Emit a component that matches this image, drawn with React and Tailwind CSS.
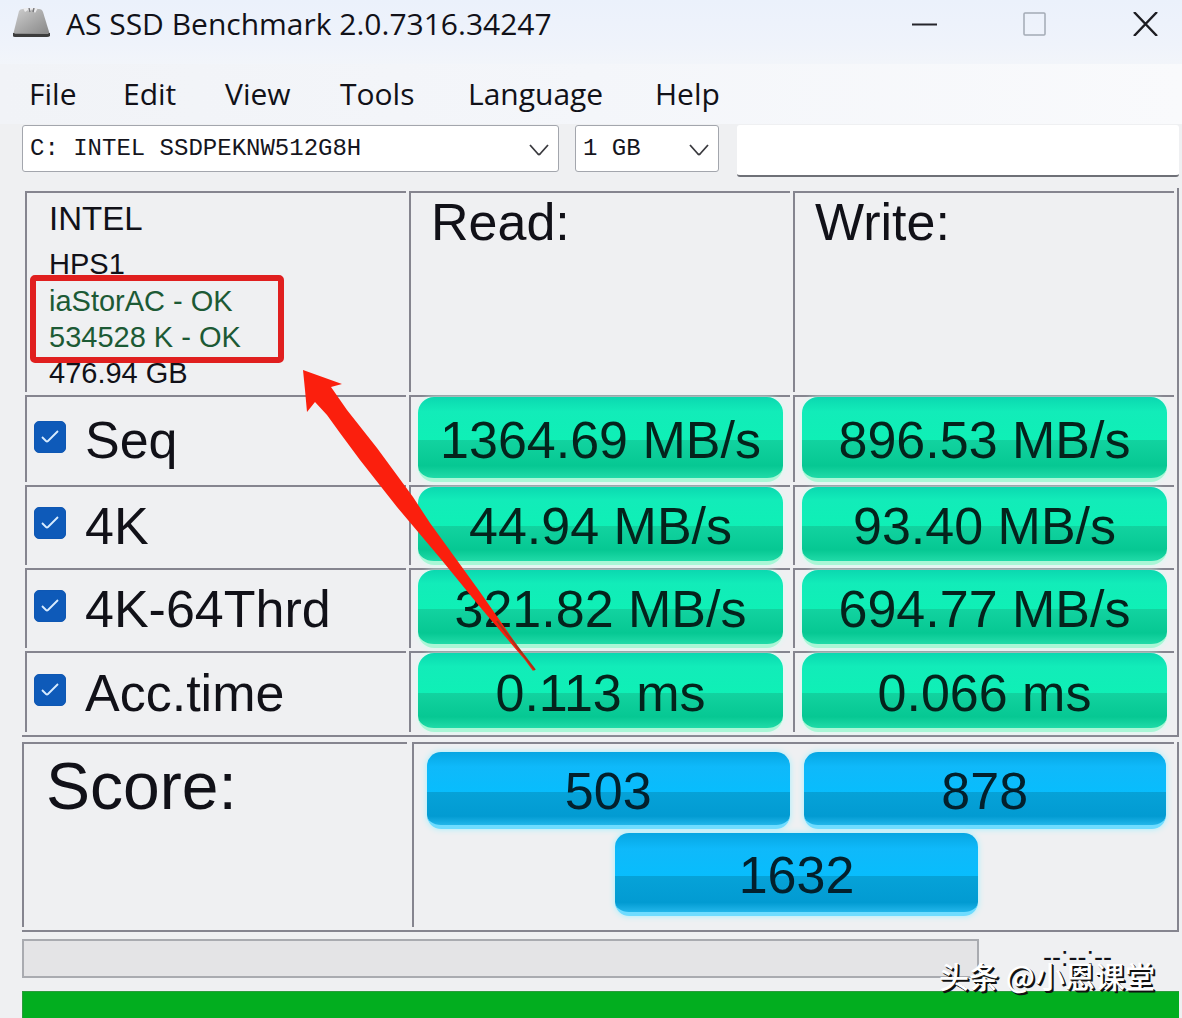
import React, { useState } from "react";

const menuItems = [
  { label: "File", width: "w-[94px]" },
  { label: "Edit", width: "w-[102px]" },
  { label: "View", width: "w-[115px]" },
  { label: "Tools", width: "w-[128px]" },
  { label: "Language", width: "w-[187px]" },
  { label: "Help", width: "w-[94px]" },
];

const tests = [
  { id: "seq", label: "Seq", read: "1364.69 MB/s", write: "896.53 MB/s", height: "h-[87px]" },
  { id: "4k", label: "4K", read: "44.94 MB/s", write: "93.40 MB/s", height: "h-[80px]" },
  { id: "4k64", label: "4K-64Thrd", read: "321.82 MB/s", write: "694.77 MB/s", height: "h-[80px]" },
  { id: "acc", label: "Acc.time", read: "0.113 ms", write: "0.066 ms", height: "h-[81px]" },
];

const cell = "border-l-2 border-t-2 border-[#85858f] p-0 text-left font-normal";

const DriveIcon = () => (
  <svg width="38" height="32" viewBox="0 0 38 32" aria-hidden="true">
    <defs>
      <linearGradient id="drive" x1="0" y1="0" x2="1" y2="1">
        <stop offset="0" stopColor="#cfcfcf" />
        <stop offset="0.5" stopColor="#a9a9a9" />
        <stop offset="1" stopColor="#858585" />
      </linearGradient>
    </defs>
    <path d="M7 3Q8 1 11 1H27Q30 1 31 4L38 27H1Z" fill="url(#drive)" />
    <path d="M1 25H38V28Q37 29 35 29H3Q1 29 1 28Z" fill="#3c3c3c" />
    <path d="M2 25H37L36 26H3Z" fill="#8c8c8c" />
    <path d="M11 0L13 4L16 2L18 4L20 1L23 5L26 0Z" fill="#ececee" />
    <path d="M17 0L18 4M22 0L21 4" stroke="#77777a" strokeWidth="1.4" />
  </svg>
);

const Chevron = () => (
  <svg
    className="pointer-events-none absolute right-[10px] top-[18px]"
    width="20"
    height="14"
    viewBox="0 0 20 14"
    fill="none"
    stroke="#3a3a3f"
    strokeWidth="1.8"
    aria-hidden="true"
  >
    <path d="M1 2L9 11Q10 12 11 11L19 2" />
  </svg>
);

const SelectBox = ({ label, options, className }) => (
  <div className={`relative h-[47px] ${className}`}>
    <select
      aria-label={label}
      className="h-full w-full appearance-none rounded-[3px] border border-[#a3a6ad] bg-white pl-[7px] font-['Liberation_Mono',monospace] text-[24px] text-[#15151d] outline-none"
    >
      {options.map((option) => (
        <option key={option}>{option}</option>
      ))}
    </select>
    <Chevron />
  </div>
);

const GreenBar = ({ children }) => (
  <div className="ml-[7px] mr-[7px] flex h-full items-center justify-center rounded-[16px] border-b-4 border-[#a9f7d6] bg-[linear-gradient(#0bd8b0_0%,#12ecb9_18%,#0ff0b6_53%,#12d3a0_53%,#06c893_85%,#20dba8_100%)] pt-1 text-[52px] leading-none text-[#04231c] shadow-[0_0_5px_#d3fff0]">
    {children}
  </div>
);

const BlueBar = ({ children, className = "" }) => (
  <div
    className={`flex items-center justify-center rounded-[14px] border-b-4 border-[#6fdcff] bg-[linear-gradient(#06a6e2_0%,#0fb9fa_20%,#08bdfd_55%,#06a2d8_55%,#029bd2_88%,#22b6ea_100%)] pt-1 text-[52px] leading-none text-[#03202c] shadow-[0_0_6px_#9ff0ff] ${className}`}
  >
    {children}
  </div>
);

const TestCheckbox = ({ id, checked, onChange }) => (
  <span className="relative mb-0.5 h-8 w-8">
    <input
      id={id}
      type="checkbox"
      checked={checked}
      onChange={onChange}
      className="block h-8 w-8 appearance-none rounded-[5px] border border-[#0e57b3] bg-white checked:bg-[#0e5ab9]"
    />
    {checked && (
      <svg
        className="pointer-events-none absolute left-[7px] top-[8px]"
        width="18"
        height="16"
        viewBox="0 0 18 16"
        fill="none"
        stroke="#d8ecff"
        strokeWidth="1.8"
        aria-hidden="true"
      >
        <path d="M1 8L5 12Q6 13 7 12L17 2" />
      </svg>
    )}
  </span>
);

// Red arrow pointing from the results up to the driver status
const Arrow = () => (
  <svg
    className="pointer-events-none absolute left-[281px] top-[181px]"
    width="234"
    height="304"
    viewBox="303 369 234 304"
    aria-hidden="true"
  >
    <path
      d="M303 370L342 384L331 387L347 410L377 448L413 497L430 523L480 592L519 648L535 669L533 671L525 660L480 607L440 558L397 507L360 460L340 433L327 415L315 402L307 412L305 390Z"
      fill="#fb1f0d"
    />
    <path d="M497 621L535 670" stroke="#a5341b" strokeWidth="2" />
  </svg>
);

const App = () => {
  const [enabled, setEnabled] = useState({
    seq: true,
    "4k": true,
    "4k64": true,
    acc: true,
  });

  const toggle = (id) => {
    setEnabled((prev) => ({ ...prev, [id]: !prev[id] }));
  };

  return (
    <div className="flex min-h-screen flex-col bg-[#eff0f2] pl-[22px] pr-[3px] font-['Liberation_Sans',Arial,sans-serif] text-[#111118]">
      {/* Title bar */}
      <header className="-ml-[22px] -mr-[3px] flex h-16 items-start bg-[linear-gradient(#ebf1fb,#eff3fb_70%,#f2f5fa)] pl-3 pr-6">
        <div className="flex h-12 flex-1 items-center gap-4">
          <DriveIcon />
          <h1 className="font-['Open_Sans',sans-serif] text-[30px] leading-none">
            AS SSD Benchmark 2.0.7316.34247
          </h1>
        </div>
        <div className="flex h-12 items-center gap-[86px]">
          <button aria-label="Minimize">
            <svg width="25" height="24" viewBox="0 0 25 24" stroke="#25252b" strokeWidth="2">
              <path d="M0 12.5H25" />
            </svg>
          </button>
          <button aria-label="Maximize">
            <svg width="24" height="24" viewBox="0 0 24 24" fill="none" stroke="#a3aab5" strokeWidth="1.5">
              <rect x="1" y="1" width="21" height="22" rx="1" />
            </svg>
          </button>
          <button aria-label="Close">
            <svg width="25" height="24" viewBox="0 0 25 24" stroke="#1d1d22" strokeWidth="2.4">
              <path d="M1 0L24 24M24 0L1 24" />
            </svg>
          </button>
        </div>
      </header>

      {/* Menu */}
      <nav className="-ml-[22px] -mr-[3px] flex h-[60px] items-center bg-[linear-gradient(90deg,#f1f3f7,#f4f6fa_50%,#f9fafc)] pl-[29px] font-['Open_Sans',sans-serif] text-[30px] leading-none">
        {menuItems.map((item) => (
          <button key={item.label} className={`text-left ${item.width}`}>
            {item.label}
          </button>
        ))}
      </nav>

      {/* Drive and size */}
      <div className="flex h-16 items-start pt-px">
        <SelectBox
          label="Drive"
          options={["C: INTEL SSDPEKNW512G8H"]}
          className="mr-4 w-[537px]"
        />
        <SelectBox
          label="Test size"
          options={["1 GB", "3 GB", "5 GB", "10 GB"]}
          className="mr-[18px] w-[144px]"
        />
        <input
          type="text"
          aria-label="Filter"
          className="h-[52px] min-w-0 flex-1 rounded-[3px] border-b-2 border-[#6e7077] bg-white px-2 text-[24px] outline-none"
        />
      </div>

      {/* Results */}
      <main className="relative">
        <table className="w-full table-fixed border-separate border-spacing-[3px] border-b-2 border-r-2 border-[#85858f]">
          <thead>
            <tr className="h-[201px] align-top">
              <td className={cell}>
                <div className="pl-[22px] pt-2 text-[29px] leading-9">
                  <p className="mb-[9px] text-[33px]">INTEL</p>
                  <p className="mb-px">HPS1</p>
                  <div className="relative text-[#1c5a35]">
                    <p>iaStorAC - OK</p>
                    <p>534528 K - OK</p>
                    <div className="absolute -left-[19px] -top-[8px] h-[88px] w-[254px] rounded-[5px] border-[6px] border-[#e01f1f]"></div>
                  </div>
                  <p>476.94 GB</p>
                </div>
              </td>
              <th scope="col" className={cell}>
                <div className="pl-5 pt-px text-[52px] leading-[56px]">Read:</div>
              </th>
              <th scope="col" className={cell}>
                <div className="pl-5 pt-px text-[52px] leading-[56px]">Write:</div>
              </th>
            </tr>
          </thead>
          <tbody>
            {tests.map((test) => (
              <tr key={test.id} className={test.height}>
                <th scope="row" className={cell}>
                  <div className="flex items-center gap-[19px] pb-1 pl-[7px]">
                    <TestCheckbox
                      id={test.id}
                      checked={enabled[test.id]}
                      onChange={() => toggle(test.id)}
                    />
                    <label htmlFor={test.id} className="pt-1 text-[52px] leading-none">
                      {test.label}
                    </label>
                  </div>
                </th>
                <td className={`h-px ${cell}`}>
                  <GreenBar>{test.read}</GreenBar>
                </td>
                <td className={`h-px ${cell}`}>
                  <GreenBar>{test.write}</GreenBar>
                </td>
              </tr>
            ))}
          </tbody>
        </table>
        <Arrow />
      </main>

      {/* Score */}
      <section className="mt-[5px] flex h-[190px] gap-[5px] border-b-2 border-r-2 border-[#85858f] pb-[3px] pr-[3px]">
        <h2 className="w-[385px] border-l-2 border-t-2 border-[#85858f] pl-[22px] pt-1 text-[66px] leading-[76px]">
          Score:
        </h2>
        <div className="grid flex-1 grid-cols-2 content-start gap-x-[14px] gap-y-1 border-l-2 border-t-2 border-[#85858f] pl-[13px] pr-2 pt-2">
          <BlueBar className="h-[77px]">503</BlueBar>
          <BlueBar className="h-[77px]">878</BlueBar>
          <BlueBar className="col-span-2 h-[83px] w-[49%] justify-self-center">1632</BlueBar>
        </div>
      </section>

      {/* Progress */}
      <footer className="relative mt-[7px] flex h-[52px] items-start">
        <div
          role="progressbar"
          aria-label="Progress"
          className="h-[39px] flex-1 border-2 border-[#a9abb0] bg-[#e4e4e6]"
        ></div>
        <span className="w-[200px] pl-16 text-[27px] leading-9">--:--:--</span>
        <p className="absolute right-6 top-[18px] whitespace-nowrap font-['Noto_Sans_CJK_SC',sans-serif] text-[30px] font-medium leading-9 text-white [text-shadow:1px_1px_0_#111,2px_2px_0_#111]">
          头条 @小恩课堂
        </p>
      </footer>
      <div className="flex-1 border-l border-t border-[#2c9a3c] bg-[#02ae1f]"></div>
    </div>
  );
};

export default App;
